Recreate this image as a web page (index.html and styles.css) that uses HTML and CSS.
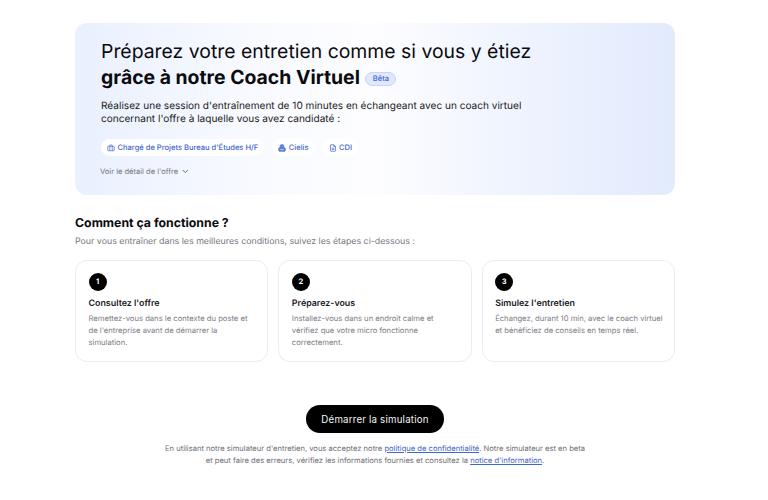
FILE: index.html
```html
<!DOCTYPE html>
<html lang="fr">
<head>
<meta charset="utf-8">
<title>Coach Virtuel</title>
<link rel="stylesheet" href="styles.css">
</head>
<body>
<main class="page">
  <section class="hero">
    <h1 class="hero-title">Préparez votre entretien comme si vous y étiez<br><strong>grâce à notre Coach Virtuel</strong> <span class="beta">Bêta</span></h1>
    <p class="hero-text">Réalisez une session d'entraînement de 10 minutes en échangeant avec un coach virtuel concernant l'offre à laquelle vous avez candidaté :</p>
    <div class="tags">
      <span class="tag"><svg class="tag-icon" viewBox="0 0 16 16"><rect x="1.5" y="4.5" width="13" height="9" rx="1.2"/><path d="M5.5 4.5V3a1 1 0 0 1 1-1h3a1 1 0 0 1 1 1v1.5M5.5 4.5v9M10.500 4.500v9"/></svg>Chargé de Projets Bureau d'Études H/F</span>
      <span class="tag"><svg class="tag-icon" viewBox="0 0 16 16"><rect x="4.500" y="1.500" width="7" height="6" rx="1.500" class="filled"/><rect x="1.500" y="7.500" width="13" height="7" rx="1.500" class="filled"/><path d="M5 11h6" class="cut"/></svg>Cielis</span>
      <span class="tag"><svg class="tag-icon" viewBox="0 0 16 16"><path d="M3 2.500a1 1 0 0 1 1-1h5.500L13 5v8.500a1 1 0 0 1-1 1H4a1 1 0 0 1-1-1z"/><path d="M9.500 1.500V5H13M5.500 8.500h5M5.500 11h5"/></svg>CDI</span>
    </div>
    <div class="details">Voir le détail de l'offre <svg class="chevron" viewBox="0 0 10 6"><path d="M1 1l4 4 4-4"/></svg></div>
  </section>

  <section class="how">
    <h2 class="how-title">Comment ça fonctionne ?</h2>
    <p class="how-sub">Pour vous entraîner dans les meilleures conditions, suivez les étapes ci-dessous :</p>
    <div class="steps">
      <article class="step">
        <span class="num">1</span>
        <h3 class="step-title">Consultez l'offre</h3>
        <p class="step-text">Remettez-vous dans le contexte du poste et de l'entreprise avant de démarrer la simulation.</p>
      </article>
      <article class="step">
        <span class="num">2</span>
        <h3 class="step-title">Préparez-vous</h3>
        <p class="step-text">Installez-vous dans un endroit calme et vérifiez que votre micro fonctionne correctement.</p>
      </article>
      <article class="step">
        <span class="num">3</span>
        <h3 class="step-title">Simulez l'entretien</h3>
        <p class="step-text">Échangez, durant 10 min, avec le coach virtuel et bénéficiez de conseils en temps réel.</p>
      </article>
    </div>
  </section>

  <div class="cta"><button class="start">Démarrer la simulation</button></div>
  <p class="legal">En utilisant notre simulateur d'entretien, vous acceptez notre <a href="#">politique de confidentialité</a>. Notre simulateur est en beta<br>et peut faire des erreurs, vérifiez les informations fournies et consultez la <a href="#">notice d'information</a>.</p>
</main>
</body>
</html>
```
FILE: styles.css
```css
* { box-sizing: border-box; }
html, body { margin: 0; background: #fff; }
body { width: 750px; font-family: Inter, "Liberation Sans", sans-serif; color: #0b0b0f; text-rendering: geometricPrecision; }
.page { width: 600px; margin: 0 auto; padding-top: 23px; }
.hero {
  height: 172px;
  padding: 15px 25px 0 26px;
  border-radius: 12px;
  background: linear-gradient(90deg, #e9f0fe 0%, #f8faff 30%, #fdfdff 50%, #eef3fe 75%, #e2eafd 100%);
}
.hero-title { margin: 0; font-size: 19.400px; line-height: 26px; font-weight: 400; }
.hero-title strong { font-weight: 700; }
.beta {
  display: inline-block; vertical-align: 3px; margin-left: 0;
  width: 31px; height: 14px; line-height: 12px; text-align: center;
  font-size: 7.500px; font-weight: 500; color: #3f66c9;
  background: #dfe8fd; border: 1px solid #c6d5fa; border-radius: 8px;
}
.hero-text { margin: 10px 0 0; width: 440px; font-size: 10.070px; line-height: 13px; color: #1a1a20; }
.tags { display: flex; gap: 8px; margin-top: 13px; }
.tag {
  display: flex; align-items: center; gap: 2.500px;
  height: 17px; padding: 0 6px; border-radius: 9px; background: #fff;
  font-size: 7.550px; font-weight: 500; color: #3f66c9;
}
.tag-icon { width: 8px; height: 8px; fill: none; stroke: #3f66c9; stroke-width: 1.400; }
.tag-icon .filled { fill: #6f8ed8; }
.tag-icon .cut { stroke: #fff; stroke-width: 1; }
.details { display: flex; align-items: center; gap: 4px; margin-top: 11px; margin-left: -1px; font-size: 7.550px; color: #75757e; }
.chevron { width: 6.500px; height: 4.500px; fill: none; stroke: #55555e; stroke-width: 1.300; }
.how { margin-top: 19px; }
.how-title { margin: 0; font-size: 12.300px; line-height: 17px; font-weight: 700; }
.how-sub { margin: 4px 0 0; font-size: 8.820px; line-height: 13px; color: #75757e; }
.steps { display: grid; grid-template-columns: repeat(3, 1fr); gap: 10px; margin-top: 12px; }
.step {
  height: 102px; padding: 11.500px 10px 0 12.500px;
  border: 1px solid #ececf0; border-radius: 12px; background: #fff;
}
.num {
  display: flex; align-items: center; justify-content: center;
  width: 18px; height: 18px; border-radius: 50%;
  background: #000; color: #fff; font-size: 7.500px; font-weight: 700;
}
.step-title { margin: 7px 0 0; font-size: 8.900px; line-height: 12px; font-weight: 600; color: #17171c; }
.step-text { margin: 3px 0 0; font-size: 7.650px; line-height: 12px; color: #7d7d85; }
.cta { display: flex; justify-content: center; margin-top: 43px; }
.start {
  width: 138px; height: 28px; border: 0; border-radius: 14px;
  background: #000; color: #f4f4f4; font: 400 9.700px Inter, sans-serif; letter-spacing: .2px;
}
.legal { margin: 10px 0 0; text-align: center; font-size: 7.600px; line-height: 12px; color: #6f6f78; }
.legal a { color: #3f66c9; }
```
